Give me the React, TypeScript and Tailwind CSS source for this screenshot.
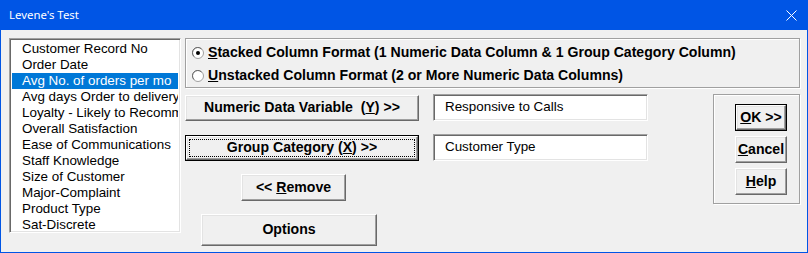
const items = [
  "Customer Record No",
  "Order Date",
  "Avg No. of orders per mo",
  "Avg days Order to delivery",
  "Loyalty - Likely to Recommend",
  "Overall Satisfaction",
  "Ease of Communications",
  "Staff Knowledge",
  "Size of Customer",
  "Major-Complaint",
  "Product Type",
  "Sat-Discrete",
];

const raised =
  "bg-[#f0f0f0] border border-t-white border-l-white border-b-[#696969] border-r-[#696969] shadow-[inset_-1px_-1px_0_#a0a0a0,inset_1px_1px_0_#e3e3e3]";
const sunken =
  "bg-white border border-t-[#a0a0a0] border-l-[#a0a0a0] border-b-white border-r-white shadow-[inset_1px_1px_0_#696969,inset_-1px_-1px_0_#e3e3e3]";
const etched =
  "border border-[#a0a0a0] shadow-[inset_1px_1px_0_#ffffff,1px_1px_0_#ffffff]";

function Btn({
  className,
  children,
  isDefault,
  focused,
}: {
  className: string;
  children: React.ReactNode;
  isDefault?: boolean;
  focused?: boolean;
}) {
  const label = <span className="whitespace-pre">{children}</span>;
  if (isDefault) {
    return (
      <div className={`border border-black flex ${className}`}>
        <div className={`flex-1 flex items-center justify-center p-[2px] ${raised}`}>
          <div
            className={`flex-1 self-stretch flex items-center justify-center ${
              focused ? "border border-dotted border-black" : ""
            }`}
          >
            {label}
          </div>
        </div>
      </div>
    );
  }
  return <div className={`flex items-center justify-center ${raised} ${className}`}>{label}</div>;
}

function Radio({ checked }: { checked?: boolean }) {
  return (
    <svg width="12" height="12" viewBox="0 0 12 12" className="shrink-0">
      <circle cx="6" cy="6" r="5.5" fill="#ffffff" stroke="#a0a0a0" />
      <path d="M2 9.5 A5 5 0 0 1 9.5 2" fill="none" stroke="#696969" strokeWidth="1" />
      {checked && <circle cx="6" cy="6" r="2" fill="#000000" />}
    </svg>
  );
}

export default function App() {
  return (
    <div
      className="w-[808px] h-[253px] flex flex-col bg-[#0055e5] text-black"
      style={{ fontFamily: '"Liberation Sans", Arial, sans-serif' }}
    >
      {/* title bar */}
      <div className="h-[30px] shrink-0 flex items-center justify-between pl-[9px] pr-[11px] text-white">
        <span className="text-[11.4px]" style={{ fontFamily: '"Noto Sans", sans-serif' }}>
          Levene's Test
        </span>
        <svg width="11" height="11" viewBox="0 0 11 11">
          <path d="M0.5 0.5 L10.5 10.5 M10.5 0.5 L0.5 10.5" stroke="#ffffff" strokeWidth="1" />
        </svg>
      </div>

      {/* body */}
      <div className="flex-1 mx-px mb-px bg-[#f0f0f0] flex pl-[8px] pt-[8px] pr-[7px] gap-[4px]">
        {/* variable list */}
        <div className={`w-[172px] h-[195px] p-[2px] ${sunken} text-[13.4px]`}>
          {items.map((it, i) => (
            <div
              key={it}
              className={`h-[16px] leading-[16px] pl-[10px] whitespace-nowrap overflow-hidden ${
                i === 2 ? "bg-[#0078d7] text-white" : ""
              }`}
            >
              {it}
            </div>
          ))}
        </div>

        <div className="flex-1 flex flex-col">
          {/* format radios */}
          <div className={`h-[50px] ${etched} pl-[6px] pt-[2px] text-[14.1px] font-bold`}>
            <div className="h-[23px] flex items-center gap-[4px]">
              <Radio checked />
              <span className="whitespace-nowrap">
                <u>S</u>tacked Column Format (1 Numeric Data Column &amp; 1 Group Category Column)
              </span>
            </div>
            <div className="h-[23px] flex items-center gap-[4px]">
              <Radio />
              <span className="whitespace-nowrap">
                <u>U</u>nstacked Column Format (2 or More Numeric Data Columns)
              </span>
            </div>
          </div>

          <div className="flex mt-[6px] gap-[65px] text-[14.1px] font-bold">
            <div className="w-[463px] flex flex-col items-start">
              <div className="flex items-start gap-[14px]">
                <Btn className="mt-px w-[234px] h-[26px]">
                  Numeric Data Variable  (<u>Y</u>) &gt;&gt;
                </Btn>
                <div className={`w-[215px] h-[27px] ${sunken} font-normal text-[13.4px] pl-[11px] leading-[23px]`}>
                  Responsive to Calls
                </div>
              </div>
              <div className="flex items-start gap-[14px] mt-[13px]">
                <Btn className="mt-px w-[234px] h-[26px]" isDefault focused>
                  Group Category (<u>X</u>) &gt;&gt;
                </Btn>
                <div className={`w-[215px] h-[27px] ${sunken} font-normal text-[13.4px] pl-[11px] leading-[23px]`}>
                  Customer Type
                </div>
              </div>
              <Btn className="mt-[13px] ml-[56px] w-[105px] h-[27px]">
                &lt;&lt; <u>R</u>emove
              </Btn>
              <Btn className="mt-[13px] ml-[16px] w-[176px] h-[32px]">Options</Btn>
            </div>

            {/* OK / Cancel / Help */}
            <div className={`w-[87px] h-[110px] ${etched} flex flex-col items-start pl-[21px] pt-[9px] gap-[5px]`}>
              <Btn className="w-[52px] h-[27px]" isDefault>
                <u>O</u>K &gt;&gt;
              </Btn>
              <Btn className="w-[52px] h-[27px]">
                <u>C</u>ancel
              </Btn>
              <Btn className="w-[52px] h-[27px]">
                <u>H</u>elp
              </Btn>
            </div>
          </div>
        </div>
      </div>
    </div>
  );
}
